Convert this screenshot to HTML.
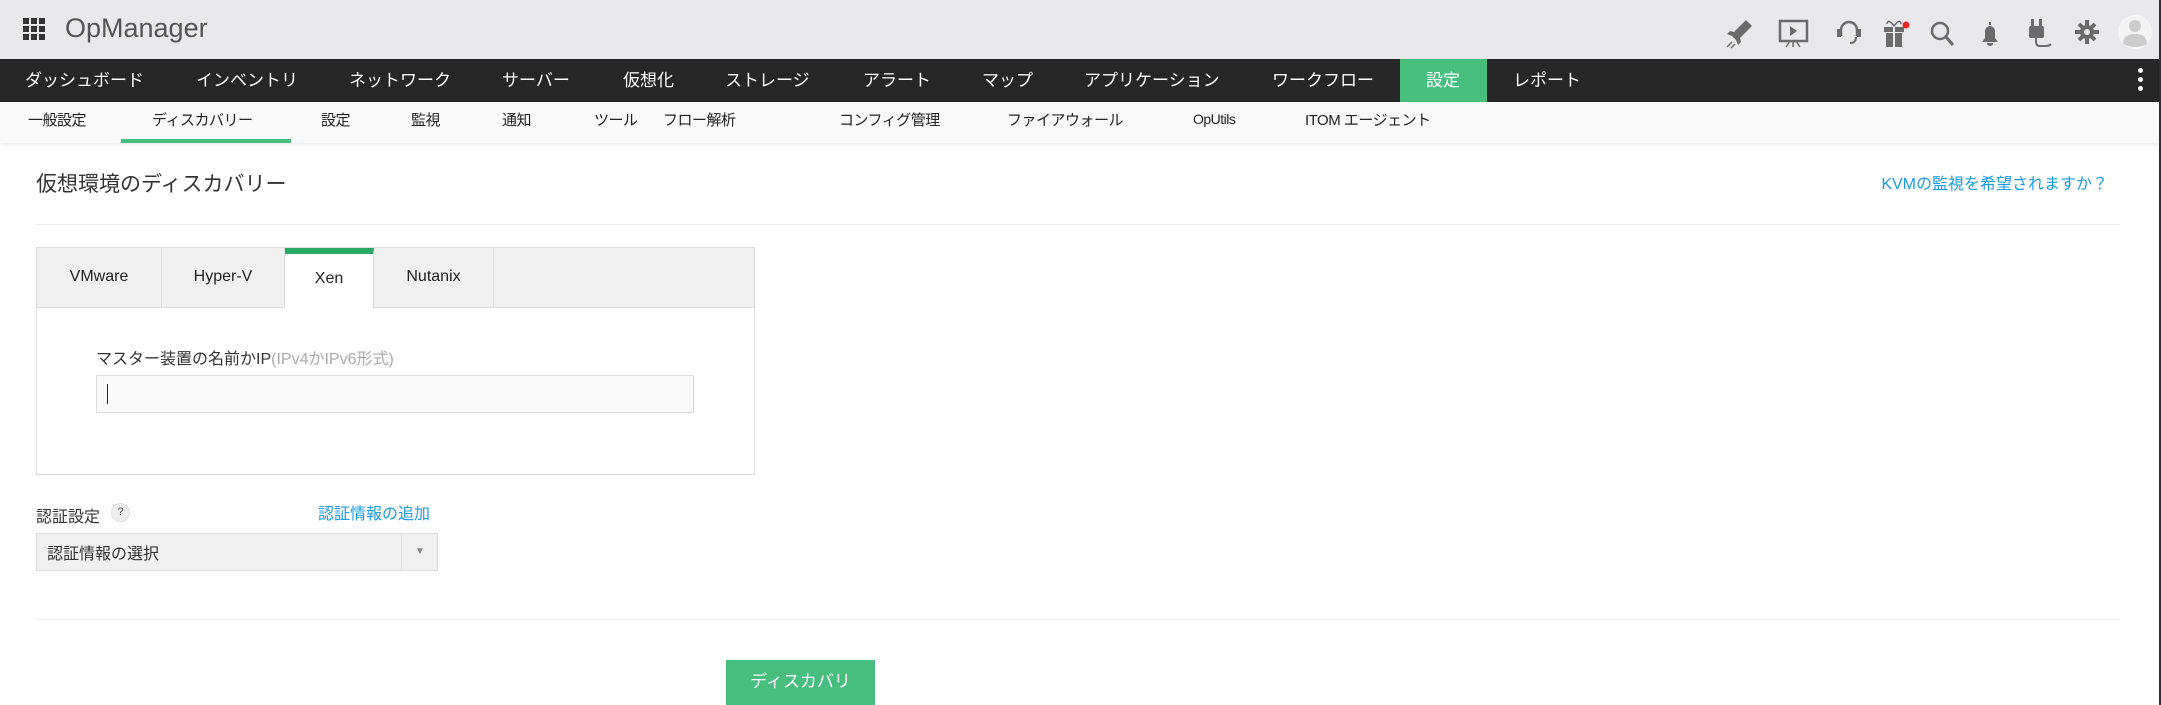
<!DOCTYPE html><html><head><meta charset="utf-8"><style>
*{margin:0;padding:0;box-sizing:border-box}
body{width:2161px;height:705px;overflow:hidden;background:#fff;font-family:"Liberation Sans","Noto Sans CJK JP",sans-serif;position:relative;color:#222}
.a{position:absolute;white-space:nowrap}
#top{position:absolute;left:0;top:0;width:2161px;height:59px;background:#e9e9eb}
#nav{position:absolute;left:0;top:59px;width:2161px;height:43px;background:#262626}
#nav span{position:absolute;top:0;line-height:43px;color:#fff;font-size:17px}
#sub{position:absolute;left:0;top:102px;width:2161px;height:41px;background:#f9f9f9;box-shadow:0 2px 3px rgba(0,0,0,.08)}
#sub span{position:absolute;top:0;line-height:38px;color:#222;font-size:15px;letter-spacing:-0.5px}
.tab{position:absolute;top:0;height:60px;line-height:58px;text-align:center;font-size:16px;color:#222;border-right:1px solid #ddd}
</style></head><body>
<div id="top"></div>
<svg class="a" style="left:23px;top:18px" width="22" height="22" viewBox="0 0 22 22" fill="#333"><rect x="0" y="0" width="6" height="6"/><rect x="8" y="0" width="6" height="6"/><rect x="16" y="0" width="6" height="6"/><rect x="0" y="8" width="6" height="6"/><rect x="8" y="8" width="6" height="6"/><rect x="16" y="8" width="6" height="6"/><rect x="0" y="16" width="6" height="6"/><rect x="8" y="16" width="6" height="6"/><rect x="16" y="16" width="6" height="6"/></svg>
<div class="a" style="left:65px;top:13px;font-size:27px;color:#555;font-family:'Liberation Sans',sans-serif;font-weight:300">OpManager</div>
<svg class="a" style="left:1720px;top:14px" width="441" height="40" viewBox="0 0 441 40" fill="#6b6b6b" stroke="#6b6b6b">
<path d="M26 6 L14 18 L10 17 L7 20 L12 22 L16 26 L18 31 L21 28 L20 24 L32 12 Z" stroke="none"/>
<path d="M12 28 l-5 5 M15 30 l-4 4" stroke-width="1.5" fill="none"/>
<rect x="60" y="7" width="27" height="20" fill="none" stroke-width="2.5"/><path d="M70 12 l7 5 -7 5z" stroke="none"/><path d="M73 27 v6 M66 33 l4-6 M80 33 l-4-6" stroke-width="1.5" fill="none"/>
<path d="M121 22 v-6 a8 8 0 0 1 16 0 v6" fill="none" stroke-width="2.5"/><rect x="117" y="15" width="4" height="8" stroke="none"/><rect x="137" y="15" width="4" height="8" stroke="none"/><path d="M136 23 q0 6 -6 6" fill="none" stroke-width="2"/>
<rect x="164" y="13" width="20" height="5" stroke="none"/><rect x="166" y="19" width="16" height="14" stroke="none"/><path d="M174 13 v20" stroke="#e9e9eb" stroke-width="2"/><path d="M174 12 q-6-8-7-2 M174 12 q6-8 7-2" fill="none" stroke-width="1.5"/><circle cx="186" cy="11" r="3.5" fill="#e8272d" stroke="none"/>
<circle cx="220" cy="17" r="8" fill="none" stroke-width="2.5"/><path d="M226 23 l7 8" stroke-width="3"/>
<path d="M262 28 h16 l-3-4 v-7 a5 5 0 0 0 -10 0 v7z M267 29 a3 3 0 0 0 6 0" stroke="none"/><rect x="269" y="8" width="2" height="3" stroke="none"/>
<rect x="309" y="12" width="15" height="12" rx="2" stroke="none"/><rect x="311" y="5" width="3" height="8" stroke="none"/><rect x="319" y="5" width="3" height="8" stroke="none"/><path d="M316 24 v4 q0 4 4 4 h6 q3 0 5-2" fill="none" stroke-width="2"/>
<circle cx="367" cy="18" r="7" stroke="none"/><path d="M367 6 v24 M355 18 h24 M359 10 l16 16 M375 10 l-16 16" stroke-width="4"/><circle cx="367" cy="18" r="3" fill="#e9e9eb" stroke="none"/>
<circle cx="415" cy="18" r="17" fill="#f4f4f4" stroke="none"/><circle cx="415" cy="12" r="6" fill="#ccc" stroke="none"/><path d="M403 30 q0-10 12-10 q12 0 12 10 q-12 6 -24 0z" fill="#ccc" stroke="none"/>
</svg>
<div id="nav">
<span style="left:25px">ダッシュボード</span><span style="left:196px">インベントリ</span><span style="left:349px">ネットワーク</span><span style="left:502px">サーバー</span><span style="left:623px">仮想化</span><span style="left:725px">ストレージ</span><span style="left:863px">アラート</span><span style="left:982px">マップ</span><span style="left:1084px">アプリケーション</span><span style="left:1272px">ワークフロー</span>
<div class="a" style="left:1400px;top:0;width:87px;height:43px;background:#47bd7e"></div><span style="left:1426px">設定</span><span style="left:1513px">レポート</span>
<div class="a" style="left:2138px;top:9px;width:5px;height:5px;border-radius:3px;background:#fff;box-shadow:0 9px 0 #fff,0 18px 0 #fff"></div>
</div>
<div id="sub">
<span style="left:28px">一般設定</span><span style="left:152px">ディスカバリー</span><span style="left:321px">設定</span><span style="left:411px">監視</span><span style="left:502px">通知</span><span style="left:594px">ツール</span><span style="left:663px">フロー解析</span><span style="left:839px">コンフィグ管理</span><span style="left:1007px">ファイアウォール</span><span style="left:1193px;font-size:14px;top:-2px">OpUtils</span><span style="left:1305px">ITOM エージェント</span>
<div class="a" style="left:121px;top:37px;width:170px;height:4px;background:#47bd7e"></div>
</div>
<div class="a" style="left:2159px;top:0;width:2px;height:705px;background:#27313a"></div>
<div class="a" style="left:36px;top:168px;font-size:21px;color:#333">仮想環境のディスカバリー</div>
<div class="a" style="right:53px;top:170px;font-size:16px;color:#1a9be8">KVMの監視を希望されますか？</div>
<div class="a" style="left:36px;top:224px;width:2084px;height:1px;background:#eee"></div>
<div class="a" style="left:36px;top:247px;width:719px;height:228px;border:1px solid #ddd">
<div class="a" style="left:0;top:0;width:717px;height:60px;background:#f0f0f0;border-bottom:1px solid #ddd"></div>
<div class="tab" style="left:0;width:125px">VMware</div>
<div class="tab" style="left:125px;width:123px">Hyper-V</div>
<div class="tab" style="left:248px;width:89px;background:#fff;height:61px;border-top:6px solid #2aa866;line-height:50px">Xen</div>
<div class="tab" style="left:337px;width:120px">Nutanix</div>
<div class="a" style="left:59px;top:97px;font-size:16px;color:#333">マスター装置の名前かIP<span style="color:#aaa">(IPv4かIPv6形式)</span></div>
<div class="a" style="left:59px;top:127px;width:598px;height:38px;border:1px solid #ddd;background:#fafafa"><div class="a" style="left:10px;top:8px;width:1px;height:20px;background:#222"></div></div>
</div>
<div class="a" style="left:36px;top:503px;font-size:16px;color:#333">認証設定</div>
<div class="a" style="left:111px;top:503px;width:19px;height:19px;border-radius:10px;background:#eee;border:1px solid #ddd;font-size:11px;line-height:17px;text-align:center;color:#555">?</div>
<div class="a" style="left:318px;top:500px;font-size:16px;color:#1a9be8">認証情報の追加</div>
<div class="a" style="left:36px;top:533px;width:402px;height:38px;border:1px solid #ddd;background:#f0f0f0"><div class="a" style="left:10px;top:6px;font-size:16px;color:#333">認証情報の選択</div><div class="a" style="left:364px;top:0;width:1px;height:36px;background:#ddd"></div><div class="a" style="left:378px;top:12px;font-size:10px;color:#888">▼</div></div>
<div class="a" style="left:36px;top:619px;width:2084px;height:1px;background:#eee"></div>
<div class="a" style="left:726px;top:660px;width:149px;height:45px;background:#47bd7e;color:#fff;font-size:17px;text-align:center;line-height:43px">ディスカバリ</div>
</body></html>
